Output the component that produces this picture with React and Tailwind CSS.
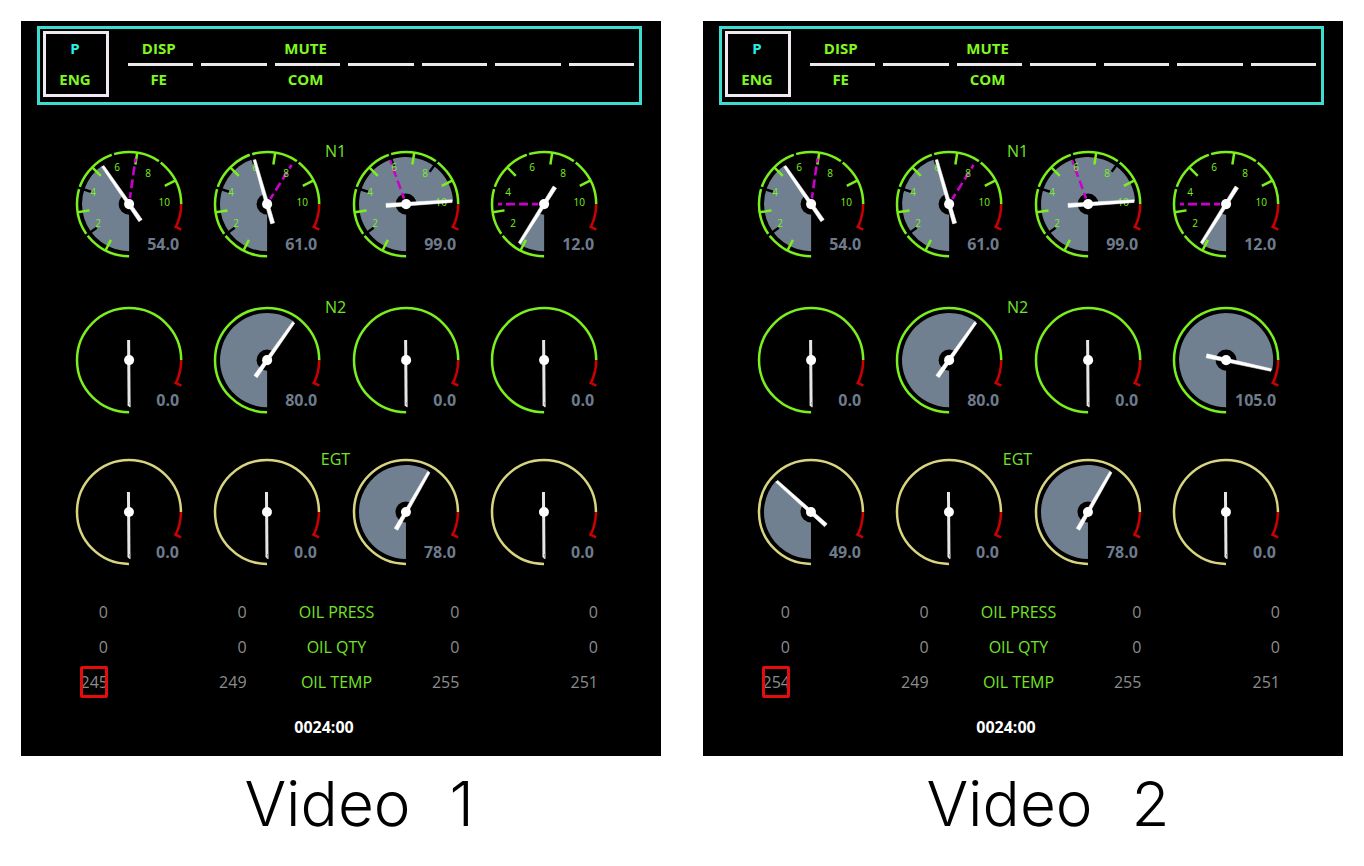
const RADIUS = 52;
const DEGREES_PER_UNIT = 2.69;

// Dial angles run clockwise, with zero pointing straight down.
function point(radius, degrees) {
  const a = (degrees * Math.PI) / 180;
  return [-radius * Math.sin(a), radius * Math.cos(a)];
}

function arc(radius, from, to) {
  const [x1, y1] = point(radius, from);
  const [x2, y2] = point(radius, to);
  const large = to - from > 180 ? 1 : 0;
  return `M${x1} ${y1}A${radius} ${radius} 0 ${large} 1 ${x2} ${y2}`;
}

function Tick({ angle, from, to, color, width }) {
  const [x1, y1] = point(from, angle);
  const [x2, y2] = point(to, angle);
  return <line x1={x1} y1={y1} x2={x2} y2={y2} stroke={color} strokeWidth={width} />;
}

const SCALE_LABELS = [
  ["2", -31, 23],
  ["4", -36, -8],
  ["6", -12, -33],
  ["8", 19, -27],
  ["10", 35, 2],
];

function Needle({ value }) {
  if (value === 0) {
    return (
      <g>
        <path d="M-2-20H1L1.5 46.500 0.500 47-1.500 45Z" fill="#e6e6e6" />
        <path d="M0 42L1.500 42 1.500 48Z" fill="#8a8f96" />
      </g>
    );
  }
  return (
    <path
      d="M-2-20H2L1.300 46H-1.300Z"
      fill="#fff"
      stroke="#fff"
      strokeWidth="0.5"
      transform={`rotate(${value * DEGREES_PER_UNIT})`}
    />
  );
}

function Gauge({ name, value, color, scale, target }) {
  const angle = value * DEGREES_PER_UNIT;
  const [fx, fy] = point(47, 0);
  return (
    <svg
      viewBox="-54 -64 108 120"
      className="block w-full"
      role="img"
      aria-label={`${name} ${value.toFixed(1)}`}
    >
      {value > 0 && (
        <>
          <path d={`${arc(47, 0, angle)}L0 0L${fx} ${fy}Z`} fill="#708090" />
          <circle r="10.5" fill="#000" />
        </>
      )}
      <path d={arc(RADIUS, 0, 270)} fill="none" stroke={color} strokeWidth="2.5" />
      <path d={arc(RADIUS, 270, 296)} fill="none" stroke="#cc0000" strokeWidth="2.5" />
      <Tick angle={296} from={50.5} to={58} color="#cc0000" width={2.5} />
      {scale && (
        <>
          {[54, 108, 162, 216].map((a) => (
            <Tick key={a} angle={a} from={40} to={54} color="#000" width={2.4} />
          ))}
          {[27, 81, 135, 189, 243].map((a) => (
            <Tick key={a} angle={a} from={40} to={52} color={color} width={2.5} />
          ))}
        </>
      )}
      {target !== undefined && (
        <line
          y1="6"
          y2="46"
          stroke="#cc00cc"
          strokeWidth="2.6"
          strokeDasharray="9 4"
          strokeDashoffset="3"
          transform={`rotate(${target})`}
        />
      )}
      {scale &&
        SCALE_LABELS.map(([t, x, y]) => (
          <text key={t} x={x} y={y} textAnchor="middle" fontSize="10" fill="#7cf01c">
            {t}
          </text>
        ))}
      <Needle value={value} />
      <circle r="5" fill="#fff" />
      <text x="50" y="46" textAnchor="end" fontSize="16" fontWeight="700" fill="#6d7b8c">
        {value.toFixed(1)}
      </text>
    </svg>
  );
}

function GaugeRow({ title, values, color, scale = false, targets = [] }) {
  const gauges = values.map((v, i) => (
    <Gauge
      key={i}
      name={`${title} engine ${i + 1}`}
      value={v}
      color={color}
      scale={scale}
      target={targets[i]}
    />
  ));
  return (
    <section className="grid grid-cols-[108fr_30fr_108fr_30fr_108fr_30fr_108fr]">
      {gauges[0]}
      <span />
      {gauges[1]}
      <h2 className="flex h-6 justify-center pr-0.5 text-base leading-[22px] text-[#74e428]">{title}</h2>
      {gauges[2]}
      <span />
      {gauges[3]}
    </section>
  );
}

const MENU = [["DISP", "FE"], null, ["MUTE", "COM"], null, null, null, null];

function MenuBar() {
  return (
    <nav className="ml-4 mr-[19px] flex h-[79px] gap-[19px] border-[3px] border-[#3cdcd0] py-[2px] pl-[3px] pr-[5px] text-[15px] font-bold leading-5 text-[#80f820]">
      <button className="flex h-[66px] w-[66px] shrink-0 flex-col items-center justify-between border-[3px] border-[#f0eaf0] pb-[5px] pr-0.5 pt-1">
        <span className="text-[#2ceee6]">P</span>
        <span>ENG</span>
      </button>
      <div className="grid flex-1 grid-cols-7 gap-2">
        {MENU.map((item, i) => (
          <button
            key={i}
            aria-label={item ? undefined : "Unassigned"}
            className="flex flex-col items-center pt-[7px]"
          >
            <span className="h-5 pr-1">{item && item[0]}</span>
            <span className="mb-[3px] mt-[5px] h-[3px] w-full bg-[#ece8ec]" />
            <span className="h-5 pr-1">{item && item[1]}</span>
          </button>
        ))}
      </div>
    </nav>
  );
}

function OilTable({ temps }) {
  const rows = [
    ["OIL PRESS", [0, 0, 0, 0]],
    ["OIL QTY", [0, 0, 0, 0]],
    ["OIL TEMP", temps],
  ];
  return (
    <table className="w-full table-fixed text-right text-base text-[#8c8c8c]">
      <colgroup>
        <col className="w-[6.3%]" />
        <col className="w-[26.5%]" />
        <col className="w-[34.4%]" />
        <col className="w-[6.3%]" />
        <col className="w-[26.5%]" />
      </colgroup>
      <tbody>
        {rows.map(([label, v]) => (
          <tr key={label} className="h-[35px]">
            <td className="p-0">
              <span className="relative inline-block">
                {v[0]}
                {label === "OIL TEMP" && (
                  <span className="absolute -inset-y-1 inset-x-0 rounded-xs border-[3px] border-[#e60c0c]" />
                )}
              </span>
            </td>
            <td className="p-0">{v[1]}</td>
            <th scope="row" className="p-0 text-center font-normal text-[#74e428]">
              {label}
            </th>
            <td className="p-0">{v[2]}</td>
            <td className="p-0">{v[3]}</td>
          </tr>
        ))}
      </tbody>
    </table>
  );
}

function EnginePanel({ caption, n2, egt, temps }) {
  return (
    <figure>
      <div className="bg-black pb-[17px] pt-[5px] font-['Open_Sans','Noto_Sans',sans-serif]">
        <MenuBar />
        <div className="pl-[54px] pr-[63px] pt-[35px]">
          <GaugeRow
            title="N1"
            values={[54, 61, 99, 12]}
            color="#7cf01c"
            scale
            targets={[188, 212, 160, 90]}
          />
          <div className="h-9" />
          <GaugeRow title="N2" values={n2} color="#7cf01c" />
          <div className="h-8" />
          <GaugeRow title="EGT" values={egt} color="#d9d480" />
          <div className="h-[26px]" />
          <OilTable temps={temps} />
        </div>
        <p className="mt-4 pr-[34px] text-center text-base font-bold leading-6 text-white">
          <time>0024:00</time>
        </p>
      </div>
      <figcaption className="flex justify-center gap-[39px] pl-12 pt-3 font-['Inter',sans-serif] text-[62px] font-light leading-[72px] text-black">
        <span>Video</span>
        <span className="w-9">{caption}</span>
      </figcaption>
    </figure>
  );
}

export default function App() {
  return (
    <main className="grid min-h-screen grid-cols-2 items-start gap-[42px] bg-white p-[21px] pb-0">
      <EnginePanel
        caption="1"
        n2={[0, 80, 0, 0]}
        egt={[0, 0, 78, 0]}
        temps={[245, 249, 255, 251]}
      />
      <EnginePanel
        caption="2"
        n2={[0, 80, 0, 105]}
        egt={[49, 0, 78, 0]}
        temps={[254, 249, 255, 251]}
      />
    </main>
  );
}
